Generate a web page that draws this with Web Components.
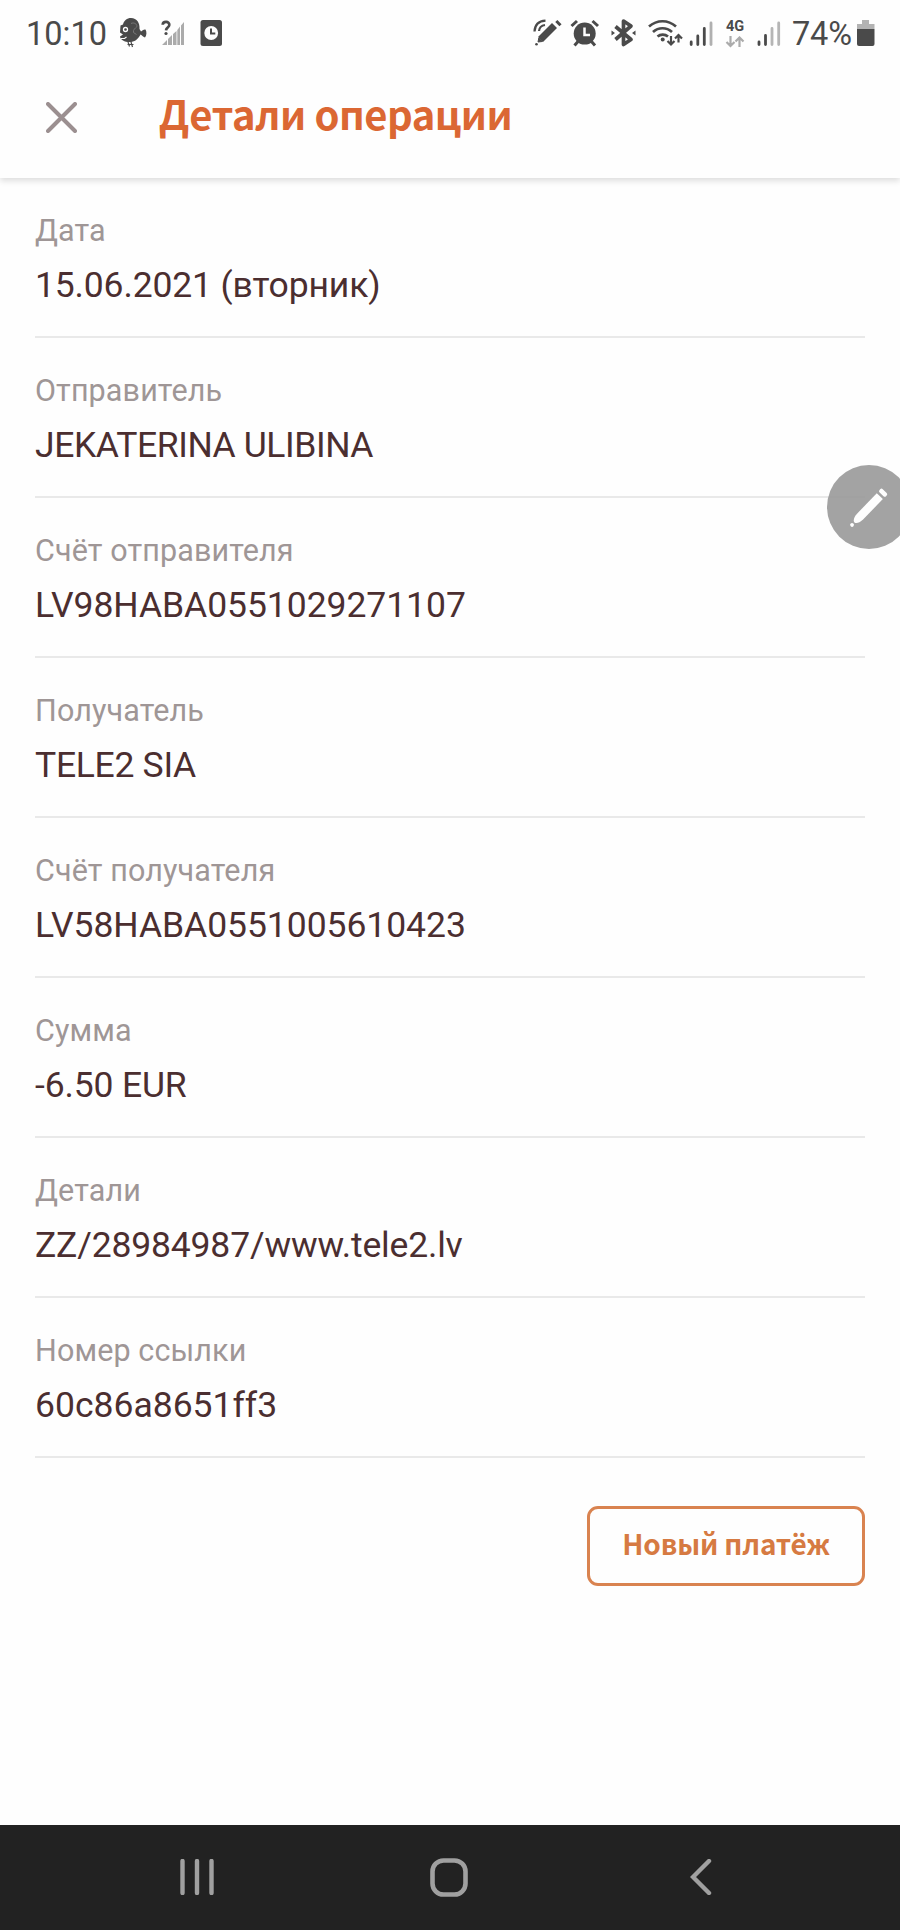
<!DOCTYPE html>
<html lang="ru">
<head>
<meta charset="utf-8">
<title>Детали операции</title>
<style>
html,body{margin:0;background:#fefefe}
body{font-family:Roboto,"Noto Sans",sans-serif}
</style>
</head>
<body>
<operation-screen></operation-screen>
<script>
const define = (name, html) => customElements.define(name, class extends HTMLElement {
  constructor() {
    super();
    const t = document.createElement('template');
    t.innerHTML = html;
    this.attachShadow({mode: 'open'}).append(t.content.cloneNode(true));
  }
});

/* Status glyphs share one coordinate system: the status bar itself. */
const glyphs = {
  bird: [118, 30, `<path d="M120.500 25.500l2.500-1c1-4 4-6.500 8-6.500 6 0 9 5 8.500 11l1.500 2.500c1-1 3-2.500 4.500-2 1.300 2 1.300 6-.5 8-1.500-.3-3-2-4.500-3-2.500 5-6 7.500-11 7.500-5 0-9-2-9.500-5.500l3-2-3-2z" fill="#4a4a4a"/><path d="M128 42l1.500 4.500M131 42l1.500 5M127.500 44.500l6 0" fill="none" stroke="#4a4a4a" stroke-width="1.200"/><circle cx="125.500" cy="29.500" r="2" fill="none" stroke="#fefefe" stroke-width="1.300"/><path d="M121 38.500l3.500 0 2-1.500" fill="none" stroke="#fefefe" stroke-width="1.100"/><path d="M131 23.500c3-1.500 6 .5 6 3-2 2-4 3-3.500 6l3 2" fill="none" stroke="#777" stroke-width="1"/>`],
  unknown: [160, 28, `<g fill="#ababab"><path d="M162 45l5-5v5zM168 39l4-4v10h-4zM173 34l3.500-3v14h-3.500zM177.300 30l2.700-3.500V45h-2.700zM181 25.500l3-3.500v23h-3z"/></g><path d="M162.700 24.800c.2-4 6.900-3.800 6.600.2-.2 2.600-3.100 2.400-3.300 5.300" fill="none" stroke="#4a4a4a" stroke-width="2.700"/><circle cx="166" cy="33.500" r="1.600" fill="#4a4a4a"/>`],
  timer: [198, 28, `<rect x="200.500" y="20" width="21.500" height="26" rx="2.500" fill="#4a4a4a"/><circle cx="211.200" cy="33" r="6.900" fill="#fefefe"/><path d="M211 28.500V33.500h4.300" stroke="#4a4a4a" stroke-width="2" fill="none"/>`],
  pen: [532, 34, `<g stroke="#4a4a4a" fill="none"><path d="M541.500 39.500L555.500 25.500" stroke-width="7"/><path d="M557.300 21l4.200 4.200" stroke-width="3"/><path d="M535.500 31.500c.3-6 4-10.300 11-10.800M540 31c.3-3.200 2.400-5.500 6-6" stroke-width="2.200"/></g><path d="M539 42l.8-4 3.500 3.500z" fill="#4a4a4a" stroke="#4a4a4a"/><circle cx="537.500" cy="44.200" r="1.300" fill="#4a4a4a"/>`],
  alarm: [570, 32, `<circle cx="585.700" cy="33.600" r="11" fill="#4a4a4a"/><g fill="none" stroke="#4a4a4a" stroke-width="3"><path d="M572.500 26l5.500-5M599 26l-5.500-5M579 41.500l-3.500 4M592.500 41.500l3.500 4"/></g><path d="M585.500 27.500v7.500h5.500" fill="none" stroke="#fefefe" stroke-width="2.500"/>`],
  bluetooth: [610, 30, `<path d="M616.500 26.500l15.500 13-7.500 5V21l7.500 5-15.500 13.500" fill="none" stroke="#4a4a4a" stroke-width="3.700" stroke-linejoin="round"/><path d="M612.500 30.500l3.500 2.500-3.500 2.500zM636.500 30.500L633 33l3.500 2.500z" fill="#4a4a4a"/>`],
  wifi: [647, 38, `<g fill="none" stroke="#4a4a4a" stroke-width="2.700"><path d="M650 26.500c8-7 19-7 27 0M654 32c5.500-5 13.500-5 19 0M658.500 36.500c3-2.500 7.500-2.500 10.500 0"/><path d="M672 36v8M668.500 41l3.500 3.500 3.500-3.500M679.500 42.500v-7M676 38.500l3.500-3.500 3.500 3.500" stroke-width="2.200"/></g><circle cx="663.700" cy="39.500" r="2" fill="#4a4a4a"/>`],
  bars3: [688, 28, `<g stroke="#4a4a4a" stroke-width="2.800" stroke-linecap="round"><path d="M692.200 42v2.500M698.800 36v8.500M705.300 28.500v16"/><path d="M712 23v21.500" stroke="#b0b0b0"/></g>`],
  bars2: [754, 30, `<g stroke="#4a4a4a" stroke-width="2.800" stroke-linecap="round"><path d="M759 42v2.500M765.500 35.500v9"/><path d="M772 28.500v16M778.700 23v21.500" stroke="#b5b5b5"/></g>`],
  battery: [854, 22, `<path d="M857 29v-5h5v-4h7v4h5.500v5z" fill="#b3b3b3"/><path d="M857 29h17.500v15a2 2 0 0 1-2 2H859a2 2 0 0 1-2-2z" fill="#4a4a4a"/>`]
};
customElements.define('status-glyph', class extends HTMLElement {
  constructor() { super(); this.attachShadow({mode: 'open'}); }
  connectedCallback() {
    const [x, w, art] = glyphs[this.getAttribute('name')];
    this.shadowRoot.innerHTML = `<style>:host{display:block;flex:none}svg{display:block}</style>
      <svg width="${w}" height="66" viewBox="${x} 0 ${w} 66">${art}</svg>`;
  }
});

define('network-type', `<style>
  :host{display:flex;flex-direction:column;align-items:center;width:22px;height:66px;box-sizing:border-box;padding-top:20px;color:#4a4a4a}
  span{font:700 14.500px/14px Roboto,sans-serif}svg{display:block;margin-top:2px}
</style><span>4G</span><svg width="20" height="12" viewBox="0 0 20 12" fill="none" stroke="#ababab" stroke-width="2.200"><path d="M5.500 0v9.500M1.500 6l4 4 4-4M14.500 11V2M10.500 5.500l4-4 4 4"/></svg>`);

define('status-bar', `<style>
  :host{display:flex;justify-content:space-between;height:66px;padding:0 24px 0 26px;color:#4a4a4a;font:400 32.500px/69px Roboto,sans-serif}
  div{display:flex}
  .time{width:92px}.bird{margin-right:12px}.unk{margin-right:10px}
  .pen{margin-right:4px}.al{margin-right:8px}.bt{margin-right:7px}.wf{margin-right:3px}
  .net{margin:0 8px 0 9px}.pct{width:62px;margin-left:8px;letter-spacing:-.2px}
</style>
<div><span class="time">10:10</span><status-glyph class="bird" name="bird"></status-glyph><status-glyph class="unk" name="unknown"></status-glyph><status-glyph name="timer"></status-glyph></div>
<div><status-glyph class="pen" name="pen"></status-glyph><status-glyph class="al" name="alarm"></status-glyph><status-glyph class="bt" name="bluetooth"></status-glyph><status-glyph class="wf" name="wifi"></status-glyph><status-glyph name="bars3"></status-glyph><network-type class="net"></network-type><status-glyph name="bars2"></status-glyph><span class="pct">74%</span><status-glyph name="battery"></status-glyph></div>`);

define('title-bar', `<style>
  :host{display:flex;align-items:center;height:112px;box-sizing:border-box;padding:0 46px 10px;box-shadow:0 3px 6px rgba(0,0,0,.13);clip-path:inset(0 0 -14px 0);background:#fefefe}
  svg{display:block;margin:0 82px 0 0}
  h1{margin:0;padding-bottom:9px;font:700 40px/60px "Noto Sans CJK SC","Noto Sans",sans-serif;letter-spacing:-.500px;color:#db6733;white-space:nowrap}
</style>
<svg width="31" height="31" viewBox="0 0 31 31"><path d="M2 2l27 27M29 2L2 29" stroke="#9b8f90" stroke-width="4" stroke-linecap="round"/></svg>
<h1><slot></slot></h1>`);

define('detail-row', `<style>
  :host{display:block;padding:35px 0 30px;border-bottom:2px solid #e9e9e9}
  .label{font-size:30.500px;line-height:36px;letter-spacing:.120px;color:#9f9696}
  .value{margin-top:15px;font-size:35.500px;line-height:42px;letter-spacing:var(--tracking,0);color:#4b2e30}
  div{white-space:nowrap}
</style><div class="label"><slot name="label"></slot></div><div class="value"><slot></slot></div>`);

define('outline-button', `<style>
  :host{display:block}
  button{display:flex;align-items:center;justify-content:center;width:278px;height:80px;padding:0 0 6px;border:3px solid #d98350;border-radius:11px;background:none;color:#d67a42;font:700 28px/40px "Noto Sans CJK SC","Noto Sans",sans-serif;letter-spacing:-.150px;white-space:nowrap}
</style><button><slot></slot></button>`);

define('pen-bubble', `<style>
  :host{position:absolute;left:827px;top:465px;width:73px;height:84px;overflow:hidden}
  svg{display:block}
</style><svg width="84" height="84" viewBox="0 0 84 84"><circle cx="42" cy="42" r="42" fill="#969696" fill-opacity=".88"/><g transform="translate(24 61) rotate(-46)" fill="#fefefe"><circle cx="1.500" cy="0" r="1.900"/><path d="M5 0C5-2 8-4 13-4.200H41.500V4.200H13C8 4 5 2 5 0z"/><rect x="44" y="-4.500" width="4.500" height="9" rx="1.800"/></g></svg>`);

define('nav-bar', `<style>
  :host{display:grid;grid-template-columns:repeat(3,252px);justify-content:center;height:105px;align-items:center;background:#222;box-sizing:border-box;padding:0 2px 1px 0}
  svg{display:block;justify-self:center}
</style>
<svg width="34" height="36" viewBox="0 0 34 36"><path d="M2.500 2v32M17 2v32M31.500 2v32" stroke="#a0a0a0" stroke-width="4.400" stroke-linecap="round"/></svg>
<svg width="38" height="39" viewBox="0 0 38 39"><rect x="2.500" y="2.500" width="33" height="34" rx="11" fill="none" stroke="#a0a0a0" stroke-width="4.600"/></svg>
<svg width="22" height="36" viewBox="0 0 22 36"><path d="M19 2L3 18l16 16" fill="none" stroke="#a0a0a0" stroke-width="4.400" stroke-linecap="round"/></svg>`);

/* label, value, letter spacing of the value */
const rows = [
  ['Дата', '15.06.2021 (вторник)', -.15],
  ['Отправитель', 'JEKATERINA ULIBINA', -.43],
  ['Счёт отправителя', 'LV98HABA0551029271107', -.06],
  ['Получатель', 'TELE2 SIA', -.3],
  ['Счёт получателя', 'LV58HABA0551005610423', -.06],
  ['Сумма', '-6.50 EUR', -.15],
  ['Детали', 'ZZ/28984987/www.tele2.lv', -.17],
  ['Номер ссылки', '60c86a8651ff3', 0]
];
define('operation-screen', `<style>
  :host{display:flex;flex-direction:column;position:relative;width:900px;height:1930px;overflow:hidden;background:#fefefe}
  main{flex:1;padding:0 35px}
  .actions{display:flex;justify-content:flex-end;padding-top:48px}
</style>
<status-bar></status-bar>
<title-bar>Детали операции</title-bar>
<main>${rows.map(([l, v, t]) => `<detail-row style="--tracking:${t}px"><span slot="label">${l}</span>${v}</detail-row>`).join('')}
<div class="actions"><outline-button>Новый платёж</outline-button></div></main>
<nav-bar></nav-bar>
<pen-bubble></pen-bubble>`);
</script>
</body>
</html>
